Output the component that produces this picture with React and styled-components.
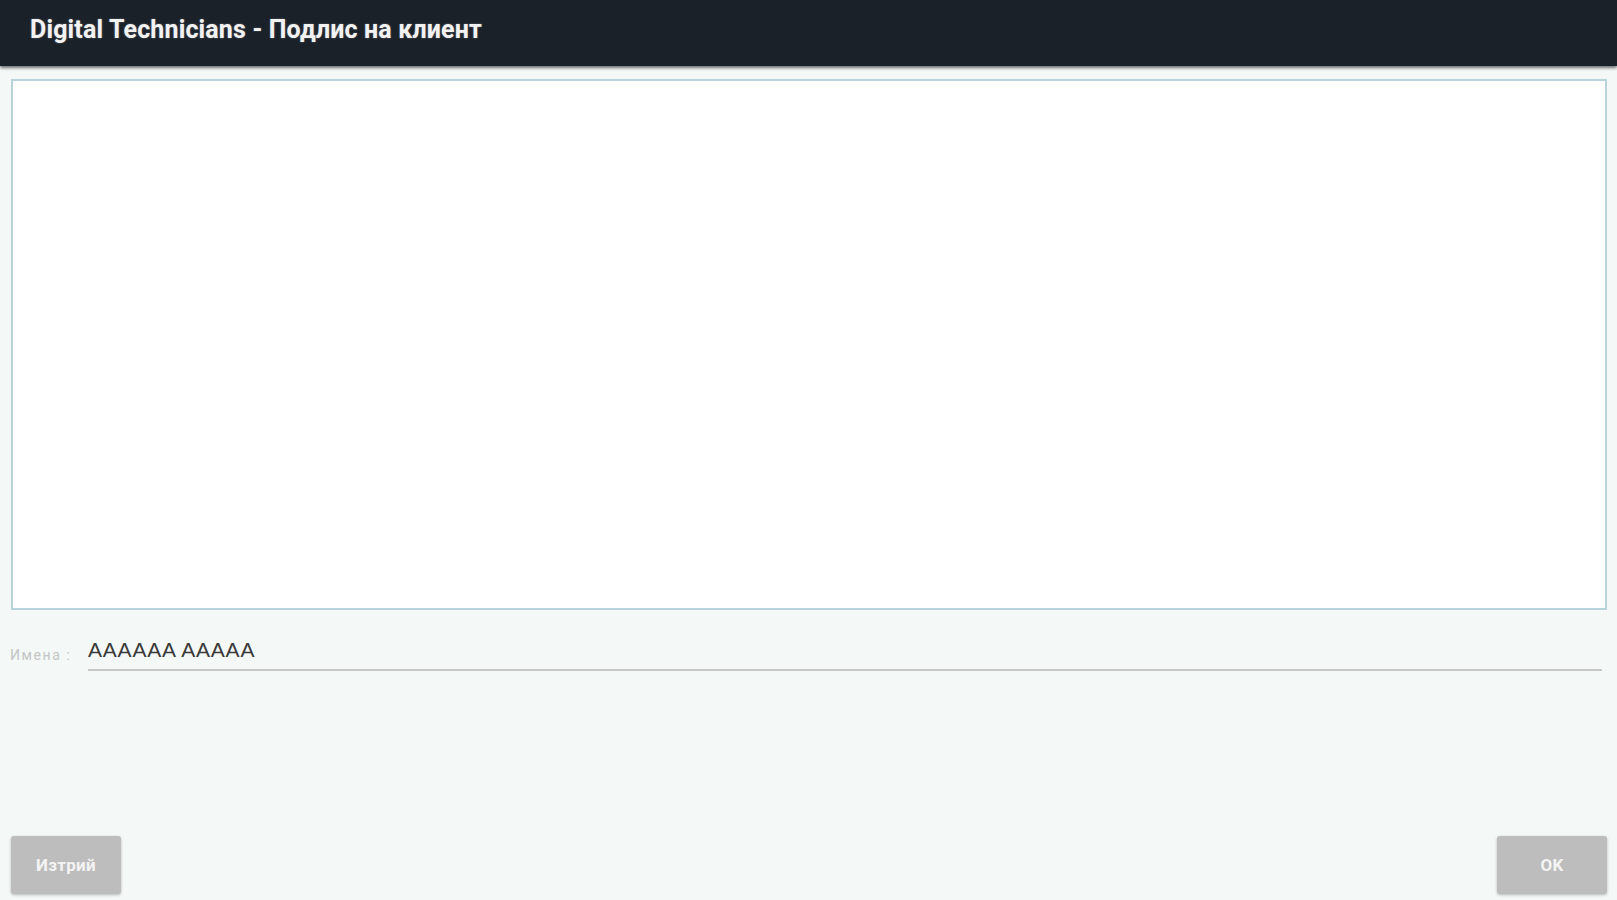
import styled, { createGlobalStyle } from 'styled-components'

const GlobalStyle = createGlobalStyle`
	html, body {
		margin: 0;
		padding: 0;
		height: 100%;
		background: #f4f8f6;
		font-family: Roboto, 'Noto Sans', sans-serif;
	}
	#root {
		height: 100%;
	}
`

const Screen = styled.div`
	height: 900px;
	display: flex;
	flex-direction: column;
	background: #f4f8f6;
	overflow: hidden;
`

const TitleBar = styled.div`
	height: 66px;
	flex-shrink: 0;
	display: flex;
	align-items: center;
	padding-left: 30px;
	background: #1b2129;
	box-shadow: 0 2px 3px rgba(0, 0, 0, 0.55);
	position: relative;
	z-index: 1;
	h1 {
		margin: 0 0 7px;
		font-size: 25px;
		font-weight: 700;
		color: #f2f2f2;
		letter-spacing: 0.15px;
		text-shadow: 0 0 2px rgba(255, 255, 255, 0.35);
	}
`

const Body = styled.div`
	flex: 1;
	display: flex;
	flex-direction: column;
	padding: 13px 10px 6px 11px;
`

const SignaturePad = styled.div`
	height: 531px;
	flex-shrink: 0;
	background: #ffffff;
	border: 2px solid #b9d3da;
	box-sizing: border-box;
`

const NameRow = styled.div`
	display: flex;
	align-items: flex-end;
	margin-top: 28px;
	gap: 15px;
	padding-right: 5px;
`

const Label = styled.span`
	font-size: 14px;
	letter-spacing: 1.6px;
	color: #c3c6c5;
	padding-bottom: 8px;
	width: 63px;
	flex-shrink: 0;
	margin-left: -1px;
	white-space: nowrap;
`

const NameInput = styled.div`
	flex: 1;
	font-family: 'Liberation Sans', Arial, sans-serif;
	font-size: 21px;
	letter-spacing: 0.8px;
	color: #3a3a3a;
	padding-bottom: 7px;
	border-bottom: 2px solid #c4c7c6;
`

const Spacer = styled.div`
	flex: 1;
`

const Actions = styled.div`
	display: flex;
	justify-content: space-between;
	align-items: center;
`

const Button = styled.button`
	width: 110px;
	height: 58px;
	border: none;
	border-radius: 3px;
	background: #bdbdbd;
	color: #f4f4f4;
	font-family: Roboto, sans-serif;
	font-size: 17px;
	font-weight: 700;
	letter-spacing: 0.3px;
	box-shadow: 0 1px 3px rgba(0, 0, 0, 0.25);
	cursor: pointer;
`

export default function App() {
	return (
		<>
			<GlobalStyle />
			<Screen>
				<TitleBar>
					<h1>Digital Technicians - Подлис на клиент</h1>
				</TitleBar>
				<Body>
					<SignaturePad />
					<NameRow>
						<Label>Имена :</Label>
						<NameInput>AAAAAA AAAAA</NameInput>
					</NameRow>
					<Spacer />
					<Actions>
						<Button>Изтрий</Button>
						<Button>OK</Button>
					</Actions>
				</Body>
			</Screen>
		</>
	)
}
